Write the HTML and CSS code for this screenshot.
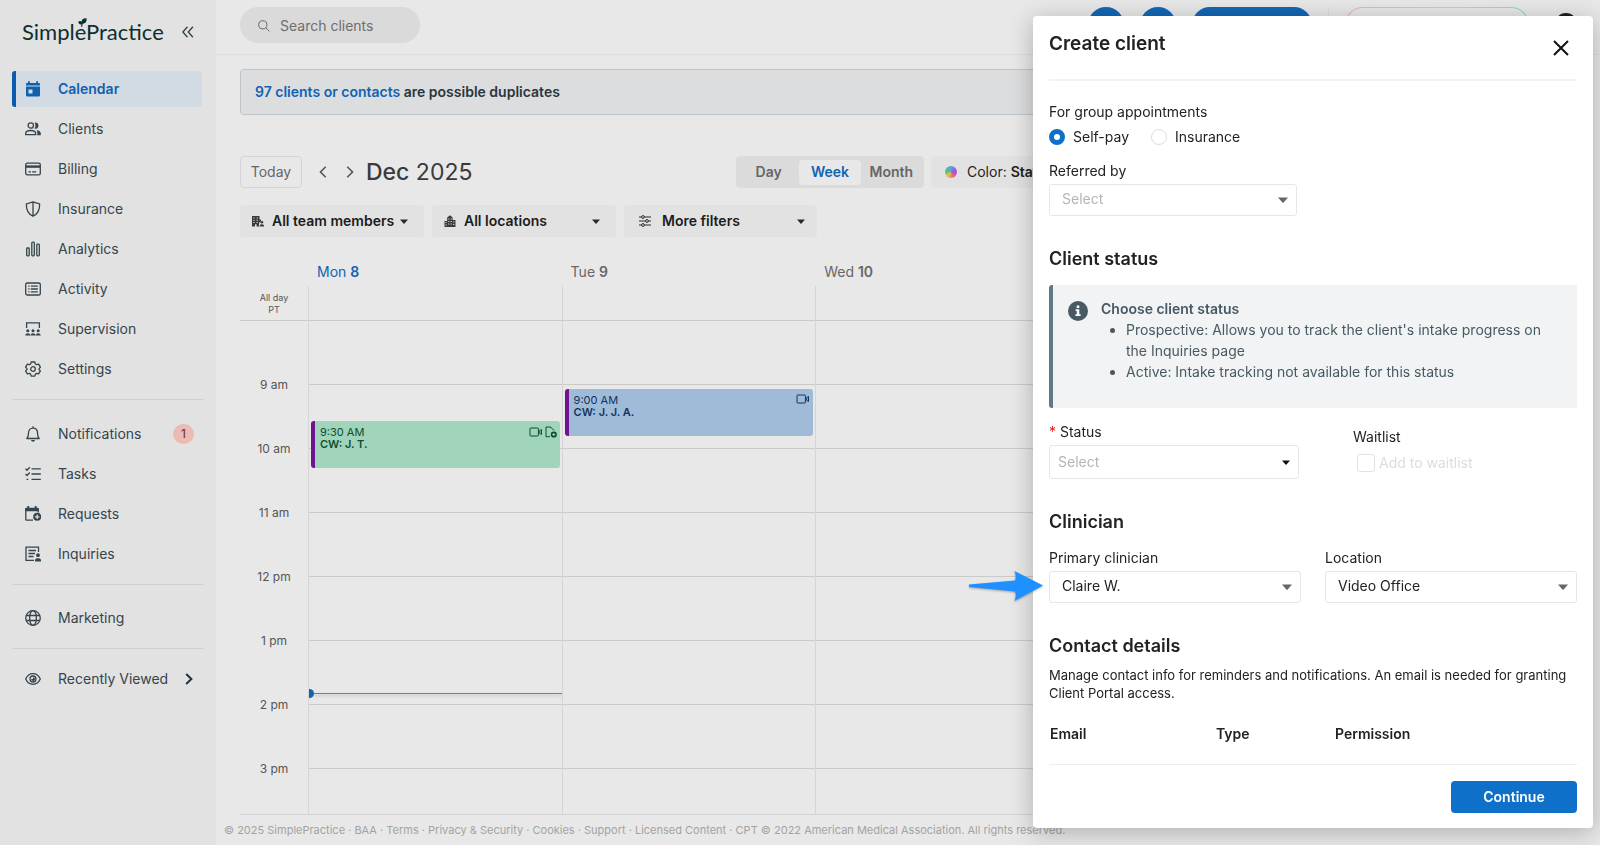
FILE: index.html
```html
<!DOCTYPE html>
<html lang="en">

<head>
  <meta charset="utf-8">
  <title>Calendar - SimplePractice</title>
  <link rel="stylesheet" href="styles.css">
</head>

<body>
  <svg class="defs" width="0" height="0">
    <defs>
      <symbol id="caret" viewBox="0 0 10 6"><path d="M0 0.5h10L5.6 5.6a.8.8 0 0 1-1.2 0z" /></symbol>
      <symbol id="video" viewBox="0 0 14 10">
        <rect x="1" y="1" width="8.4" height="8" rx=".6" fill="none" stroke="currentColor" />
        <path d="M10.700 3.500 12.500 2.500v5L10.700 6.500z" fill="none" stroke="currentColor" />
      </symbol>
    </defs>
  </svg>

  <div class="app">
    <aside class="sidebar">
      <div class="brand">
        <a class="logo" href="#">SimplePractice
          <svg class="leaf" viewBox="0 0 10 10"><path d="M9.6.4C6 .2 4 1.600 4.200 4 2.800 3 1.400 3.200.200 4.200c.6 2.600 2 3.400 3.600 2.800L3.400 9.800h1.400c-.1-1.500.1-2.400.6-3.400C8.600 6.400 9.700 4 9.600.4z" /></svg>
        </a>
        <button class="collapse" type="button" aria-label="Collapse menu">
          <svg width="12" height="12" viewBox="0 0 12 12"><path d="M5.500.8.9 6l4.600 5.200M10.900.8 6.300 6l4.600 5.200" /></svg>
        </button>
      </div>

      <nav class="nav">
        <a class="nav-item active" href="#">
          <svg class="icon" viewBox="0 0 16 16"><path fill="currentColor" d="M1 5.500h14V14.200a1.300 1.300 0 0 1-1.300 1.300H2.300A1.300 1.300 0 0 1 1 14.200zM3.500 8.500v4h4v-4zM1 4.500V3.200C1 2.500 1.500 2 2.200 2H3V.2h1.800V2h6.400V.2H13V2h.8c.7 0 1.200.5 1.200 1.200v1.300z" fill-rule="evenodd" /></svg>
          Calendar</a>
        <a class="nav-item" href="#">
          <svg class="icon" viewBox="0 0 16 16"><circle cx="5.800" cy="4.500" r="2.700" /><path d="M.7 13.600v-1c0-2 2.200-3.100 5-3.100s5 1.100 5 3.100v1z" /><path class="solid" d="M9.500 1.500a3.200 3.200 0 1 1 0 6.200c1.300-1.500 1.300-4.600 0-6.200zM11.600 9c2.600.5 4.200 1.800 4.200 3.600v1.600h-3.500v-1.700c0-1.400 0-2.400-.7-3.500z" /></svg>
          Clients</a>
        <a class="nav-item" href="#">
          <svg class="icon" viewBox="0 0 16 16"><rect x=".7" y="2.200" width="14.600" height="11.600" rx="1.600" /><path class="solid" d="M1 4.400h14v2.400H1z" /><path d="M3.500 10.800h2.500M7.200 10.800h4" /></svg>
          Billing</a>
        <a class="nav-item" href="#">
          <svg class="icon" viewBox="0 0 16 16"><path d="M8 .9 14.600 3c.3 5.800-1.500 9.800-6.600 12.200C2.900 12.800 1.100 8.800 1.400 3zM8 1v14" /></svg>
          Insurance</a>
        <a class="nav-item" href="#">
          <svg class="icon" viewBox="0 0 16 16"><rect x="1.700" y="7" width="2.500" height="7.800" rx=".8" /><rect x="6.800" y="1.200" width="2.500" height="13.600" rx=".8" /><rect x="11.800" y="3.200" width="2.500" height="11.600" rx=".8" /></svg>
          Analytics</a>
        <a class="nav-item" href="#">
          <svg class="icon" viewBox="0 0 16 16"><rect x=".7" y="2" width="14.600" height="12" rx="1.600" /><path d="M3.300 5.200h1.200M3.300 8h1.200M3.300 10.800h1.200M5.800 5.200h7M5.800 8h7M5.800 10.800h7" /></svg>
          Activity</a>
        <a class="nav-item" href="#">
          <svg class="icon" viewBox="0 0 16 16"><path d="M1.600 7V1.800h12.800V7" /><g class="solid"><circle cx="2.800" cy="9.800" r="1.500" /><circle cx="8" cy="9.800" r="1.500" /><circle cx="13.200" cy="9.800" r="1.500" /><path d="M.3 14.600c0-3 5-3 5 0zM5.500 14.600c0-3 5-3 5 0zM10.700 14.600c0-3 5-3 5 0z" /></g></svg>
          Supervision</a>
        <a class="nav-item" href="#">
          <svg class="icon" viewBox="0 0 16 16"><path d="M6.200 1h3.600l.6 2 1.200.7 2-.5 1.800 3L14 7.600v.9l1.400 1.400-1.800 3-2-.5-1.200.7-.6 2H6.200l-.6-2-1.200-.7-2 .5-1.800-3L2 8.500v-.9L.6 6.200l1.800-3 2 .5L5.600 3z" stroke-linejoin="round" /><circle cx="8" cy="8" r="2.300" /></svg>
          Settings</a>
      </nav>

      <nav class="nav">
        <a class="nav-item" href="#">
          <svg class="icon" viewBox="0 0 16 16"><path d="M1.800 12.500c1.500-1.400 1.700-3 1.700-5.500 0-3 1.900-4.900 4.500-4.900s4.500 1.900 4.500 4.900c0 2.500.2 4.100 1.700 5.500zM8 .3v1.800" stroke-linejoin="round" /><path class="solid" d="M6 14h4c-.3 1.100-1 1.700-2 1.700S6.300 15.100 6 14z" /></svg>
          Notifications <span class="badge">1</span></a>
        <a class="nav-item" href="#">
          <svg class="icon" viewBox="0 0 16 16"><path d="M6.500 2.800h9.300M6.500 8h9.300M6.500 13.400h9.300M.5 2.700 2 4.200l2.800-3M.5 8 2 9.500l2.800-3M1.500 13.400h1.800" /></svg>
          Tasks</a>
        <a class="nav-item" href="#">
          <svg class="icon" viewBox="0 0 16 16"><path d="M8 14.200H1.700A1 1 0 0 1 .8 13.200V3h12.400v3.500" /><path class="solid" d="M.2 5.200V3.200c0-.9.5-1.400 1.300-1.400h.8V0h1.900v1.800h5.500V0h1.900v1.800h.8c.8 0 1.300.5 1.300 1.400v2z" /><path class="solid" fill-rule="evenodd" d="M12.200 6.800a4 4 0 1 1 0 8 4 4 0 0 1 0-8zM11.600 8.600v1.600H10v1.200h1.600V13h1.200v-1.600h1.600v-1.200h-1.600V8.600z" /></svg>
          Requests</a>
        <a class="nav-item" href="#">
          <svg class="icon" viewBox="0 0 16 16"><path d="M9 14.300H1V1.200h12.500V6M3.500 4.500H11M3.500 7.500H10M3.500 10.500h5" /><g class="solid"><circle cx="13" cy="9.200" r="1.900" /><path d="M10 15.600v-1.400c0-2.500 6-2.500 6 0v1.400z" /></g></svg>
          Inquiries</a>
      </nav>

      <nav class="nav">
        <a class="nav-item" href="#">
          <svg class="icon" viewBox="0 0 16 16"><circle cx="8" cy="8" r="7.300" /><ellipse cx="8" cy="8" rx="3.400" ry="7.300" /><path d="M1.300 5.500h13.400M1.300 10.500h13.400" /></svg>
          Marketing</a>
      </nav>

      <nav class="nav">
        <a class="nav-item" href="#">
          <svg class="icon" viewBox="0 0 16 16"><path d="M.7 8C2.300 4.400 5 2.700 8 2.700S13.700 4.400 15.300 8C13.700 11.600 11 13.300 8 13.300S2.300 11.600.7 8z" /><circle cx="8" cy="8" r="3" /><path class="solid" d="M6.200 8H8V6.200A1.900 1.900 0 1 1 6.200 8z" /></svg>
          Recently Viewed
          <svg class="more" width="8" height="12" viewBox="0 0 8 12"><path d="M1.200 1 6.400 6l-5.200 5" /></svg></a>
      </nav>
    </aside>

    <main class="main">
      <header class="topbar">
        <label class="search">
          <svg width="12" height="12" viewBox="0 0 12 12"><circle cx="4.800" cy="4.800" r="4.100" /><path d="m7.900 7.900 3.500 3.500" /></svg>
          <input type="search" placeholder="Search clients" aria-label="Search clients">
        </label>
        <div class="actions">
          <button class="round" type="button" aria-label="Messages"></button>
          <button class="round" type="button" aria-label="Help"></button>
          <button class="create" type="button" aria-label="Create"></button>
          <span class="sep"></span>
          <button class="assistant" type="button" aria-label="Assistant"></button>
          <button class="avatar" type="button" aria-label="Account"></button>
        </div>
      </header>

      <div class="content">
        <p class="notice"><a href="#">97 clients or contacts</a> are possible duplicates</p>

        <div class="toolbar">
          <button class="today" type="button">Today</button>
          <button class="arrow" type="button" aria-label="Previous week"><svg width="8" height="12" viewBox="0 0 8 12"><path d="M6.700.8 1.500 6l5.200 5.200" /></svg></button>
          <button class="arrow" type="button" aria-label="Next week"><svg width="8" height="12" viewBox="0 0 8 12"><path d="M1.300.8 6.500 6l-5.200 5.200" /></svg></button>
          <h1 class="month"><b>Dec</b> 2025</h1>
          <div class="views">
            <button type="button">Day</button>
            <button class="selected" type="button">Week</button>
            <button type="button">Month</button>
          </div>
          <button class="color" type="button"><span class="wheel"></span><span>Color: <b>Status</b></span></button>
        </div>

        <div class="filters">
          <div class="filter">
            <svg class="filter-icon" viewBox="0 0 12 12"><path fill-rule="evenodd" d="M0 1h7.500v3.500H9v2A2.500 2.500 0 0 0 7 9v2.500H4.600V9.300H3v2.200H0zM1.400 2.500v1h1.200v-1zM4.600 2.500v1h1.200v-1zM1.400 4.800v1h1.200v-1zM4.600 4.800v1h1.200v-1zM1.400 7.100v1h1.200v-1zM4.600 7.100v1h1.200v-1z" /><circle cx="9.900" cy="7.200" r="1.300" /><path d="M7.700 11.500v-.8c0-2 4.300-2 4.300 0v.8z" /></svg>
            <select aria-label="Team members"><option>All team members</option></select>
            <svg class="caret" width="8" height="5"><use href="#caret" /></svg>
          </div>
          <div class="filter">
            <svg class="filter-icon" viewBox="0 0 12 12"><path fill-rule="evenodd" d="M.5 6h2.700V2.500L6 .2l2.600 2.300V5h2.900v7H.5zM1.500 7v1h1.200V7zM1.500 9.400v1h1.200v-1zM4.200 3.400v1h1.200v-1zM6.600 3.400v1h1.200v-1zM4.200 6v1h1.200V6zM6.600 6v1h1.200V6zM4.200 8.500v1h1.200v-1zM6.600 8.500v1h1.200v-1zM9.200 6.500v1h1.200v-1zM9.200 9v1h1.200V9z" /></svg>
            <select aria-label="Locations"><option>All locations</option></select>
            <svg class="caret" width="8" height="5"><use href="#caret" /></svg>
          </div>
          <div class="filter wide">
            <svg class="filter-icon line" viewBox="0 0 12 12"><path d="M0 2h2.500M5.500 2H12M0 6h6.500M9.500 6H12M0 10h2.500M5.500 10H12" /><circle cx="4" cy="2" r="1.400" /><circle cx="8" cy="6" r="1.400" /><circle cx="4" cy="10" r="1.400" /></svg>
            <select aria-label="More filters"><option>More filters</option></select>
            <svg class="caret" width="8" height="5"><use href="#caret" /></svg>
          </div>
        </div>

        <div class="calendar">
          <div class="cal-row cal-head">
            <span></span>
            <span class="current">Mon <b>8</b></span>
            <span>Tue <b>9</b></span>
            <span>Wed <b>10</b></span>
            <span></span>
            <span></span>
          </div>
          <div class="cal-row all-day">
            <span class="all-day-label">All day<br>PT</span>
            <div class="day"></div><div class="day"></div><div class="day"></div><div class="day"></div><div class="day"></div>
          </div>
          <div class="cal-row cal-body">
            <div class="hours">
              <span>9 am</span><span>10 am</span><span>11 am</span><span>12 pm</span><span>1 pm</span><span>2 pm</span><span>3 pm</span>
            </div>
            <div class="day slots">
              <a class="event confirmed" href="#" style="top: 100px">
                <span>9:30 AM</span><b>CW: J. T.</b>
                <span class="event-icons">
                  <svg width="14" height="10"><use href="#video" /></svg>
                  <svg width="12" height="12" viewBox="0 0 12 12"><path d="M5 10.700H1V1h4.500L9 4.500M5.500 1v1" fill="none" stroke="currentColor" /><path fill="currentColor" fill-rule="evenodd" d="M8.800 5.400a3.100 3.100 0 1 1 0 6.200 3.100 3.100 0 0 1 0-6.200zM8.300 7v1h-1v1h1v1h1V9h1V8h-1V7z" /></svg>
                </span>
              </a>
              <div class="now" style="top: 372px"></div>
            </div>
            <div class="day slots">
              <a class="event" href="#" style="top: 68px">
                <span>9:00 AM</span><b>CW: J. J. A.</b>
                <span class="event-icons"><svg width="14" height="10"><use href="#video" /></svg></span>
              </a>
            </div>
            <div class="day slots"></div>
            <div class="day slots"></div>
            <div class="day slots"></div>
          </div>
        </div>
      </div>

      <footer class="legal">© 2025 SimplePractice · <a href="#">BAA</a> · <a href="#">Terms</a> · <a href="#">Privacy &amp; Security</a> · <a href="#">Cookies</a> · <a href="#">Support</a> · <a href="#">Licensed Content</a> · CPT © 2022 American Medical Association. All rights reserved.</footer>
    </main>
  </div>

  <form class="drawer">
    <header class="drawer-head">
      <h2>Create client</h2>
      <button class="close" type="button" aria-label="Close"><svg width="16" height="16" viewBox="0 0 16 16"><path d="m1 1 14 14M15 1 1 15" /></svg></button>
    </header>

    <div class="drawer-body">
      <fieldset class="billing">
        <legend>For group appointments</legend>
        <label><input type="radio" name="billing" checked>Self-pay</label>
        <label><input type="radio" name="billing">Insurance</label>
      </fieldset>

      <div class="field referred">
        <label for="referred">Referred by</label>
        <div class="select">
          <select id="referred" class="empty"><option>Select</option></select>
          <svg class="caret" width="10" height="6"><use href="#caret" /></svg>
        </div>
      </div>

      <section>
        <h3>Client status</h3>
        <div class="info">
          <svg width="20" height="20" viewBox="0 0 20 20"><circle cx="10" cy="10" r="10" /><path fill="#fff" d="M8.700 4.500h2.600V7H8.700zM7.600 8.200h3.700v5h1.300v1.700H7.400v-1.700h1.400V9.900H7.600z" /></svg>
          <div>
            <strong>Choose client status</strong>
            <ul>
              <li>Prospective: Allows you to track the client's intake progress on the Inquiries page</li>
              <li>Active: Intake tracking not available for this status</li>
            </ul>
          </div>
        </div>
        <div class="status-row">
          <div class="field">
            <label for="status"><span class="required">*</span> Status</label>
            <div class="select tall">
              <select id="status" class="empty"><option>Select</option></select>
              <svg class="caret dark" width="8" height="5"><use href="#caret" /></svg>
            </div>
          </div>
          <fieldset class="waitlist">
            <legend>Waitlist</legend>
            <label><input type="checkbox" disabled>Add to waitlist</label>
          </fieldset>
        </div>
      </section>

      <section>
        <h3>Clinician</h3>
        <div class="two-cols">
          <div class="field">
            <label for="clinician">Primary clinician</label>
            <div class="select">
              <select id="clinician"><option>Claire W.</option></select>
              <svg class="caret" width="10" height="6"><use href="#caret" /></svg>
            </div>
          </div>
          <div class="field">
            <label for="location">Location</label>
            <div class="select">
              <select id="location"><option>Video Office</option></select>
              <svg class="caret" width="10" height="6"><use href="#caret" /></svg>
            </div>
          </div>
        </div>
      </section>

      <section>
        <h3>Contact details</h3>
        <p class="hint">Manage contact info for reminders and notifications. An email is needed for granting Client Portal access.</p>
        <table class="contacts">
          <thead>
            <tr><th class="col-email">Email</th><th class="col-type">Type</th><th>Permission</th></tr>
          </thead>
        </table>
      </section>
    </div>

    <footer class="drawer-foot">
      <button class="primary" type="submit">Continue</button>
    </footer>

    <!-- pointer to the clinician field -->
    <svg class="pointer" width="76" height="32" viewBox="0 0 76 32"><path d="M1 14.500 47 10.500C48.500 7.500 47.500 4 46.500 1L75 15.500 46.500 31c1-3 2-6.500.5-9.500L1 17z" /></svg>
  </form>
</body>

</html>
```

FILE: styles.css
```css
* {
  box-sizing: border-box;
}

body {
  margin: 0;
  background: #e8e8e8;
  color: #36454c;
  font-family: Inter, "Liberation Sans", sans-serif;
  font-size: 14px;
  line-height: 20px;
}

button, input, select {
  margin: 0;
  padding: 0;
  border: 0;
  background: none;
  color: inherit;
  font: inherit;
}

select {
  appearance: none;
}

a {
  color: inherit;
  text-decoration: none;
}

h1, h2, h3, p, ul {
  margin: 0;
}

b, strong {
  font-weight: 600;
}

fieldset {
  margin: 0;
  padding: 0;
  border: 0;
}

legend {
  padding: 0;
}

.defs {
  position: absolute;
}

.app {
  display: flex;
  height: 100vh;
}

/* Sidebar */
.sidebar {
  flex: 0 0 216px;
  padding: 0 12px;
  background: #e2e2e2;
}

.brand {
  display: flex;
  align-items: center;
  justify-content: space-between;
  height: 71px;
  padding: 0 10px 8px;
}

.logo {
  position: relative;
  color: #0b2f33;
  font-family: Lato, sans-serif;
  font-size: 22px;
  line-height: 24px;
}

.leaf {
  position: absolute;
  top: -2px;
  left: 56px;
  width: 9px;
  height: 9px;
  fill: #0b2f33;
}

.collapse svg {
  display: block;
  fill: none;
  stroke: #36454c;
  stroke-width: 1.4;
}

.nav {
  display: flex;
  flex-direction: column;
  gap: 4px;
  padding-bottom: 12px;
}

.nav + .nav {
  padding-top: 16px;
  border-top: 1px solid #d0d0d0;
}

.nav + .nav + .nav {
  padding-top: 15px;
}

.nav + .nav + .nav + .nav {
  padding-top: 12px;
}

.nav-item {
  display: flex;
  align-items: center;
  height: 36px;
  padding-left: 13px;
  margin-right: 2px;
}

.nav-item.active {
  padding-left: 9px;
  border-left: 4px solid #0b5cad;
  border-radius: 3px;
  background: #d2dae4;
  color: #1060b0;
  font-weight: 600;
}

.icon {
  width: 16px;
  height: 16px;
  margin-right: 17px;
  fill: none;
  stroke: currentColor;
  stroke-width: 1.3;
}

.active .icon {
  stroke: none;
}

.solid {
  fill: currentColor;
  stroke: none;
}

.badge {
  width: 21px;
  height: 20px;
  margin: 0 8px 0 auto;
  border-radius: 10px;
  background: #ebbab3;
  color: #6d2a24;
  font-size: 12px;
  text-align: center;
}

.more {
  margin: 0 9px 0 auto;
  fill: none;
  stroke: #22313a;
  stroke-width: 2;
}

/* Main column */
.main {
  display: flex;
  flex: 1;
  flex-direction: column;
  min-width: 0;
}

.topbar {
  display: flex;
  justify-content: space-between;
  height: 55px;
  padding: 7px 23px 0 24px;
  border-bottom: 1px solid #dedede;
}

.search {
  display: flex;
  align-items: center;
  gap: 10px;
  width: 180px;
  height: 36px;
  padding: 1px 18px 0;
  border-radius: 18px;
  background: #dadada;
}

.search svg {
  flex: none;
  fill: none;
  stroke: #6b6b6b;
}

.search input {
  width: 100%;
}

.search input::placeholder {
  color: #6e6e6e;
}

.actions {
  display: flex;
  gap: 16px;
}

.round, .create {
  width: 36px;
  height: 36px;
  border-radius: 18px;
  background: #1366b5;
}

.create {
  width: 120px;
}

.sep {
  width: 1px;
  height: 36px;
  background: #dedede;
}

.assistant {
  width: 184px;
  height: 36px;
  border: 1px solid transparent;
  border-radius: 18px;
  background: linear-gradient(#e8e8e8, #e8e8e8) padding-box, linear-gradient(90deg, #e5b5b5, #b9d3d8 60%, #8fcfe0) border-box;
}

.avatar {
  width: 22px;
  height: 22px;
  margin: 6px 0 0 10px;
  border-radius: 50%;
  background: #14232a;
}

.content {
  display: flex;
  flex: 1;
  flex-direction: column;
  min-height: 0;
  padding: 14px 24px 0;
}

.notice {
  padding: 12px 14px;
  border: 1px solid #bdc5ca;
  border-radius: 4px;
  background: #dcdddf;
  color: #2a363c;
  font-weight: 600;
}

.notice a {
  color: #1163b3;
}

.toolbar {
  display: flex;
  align-items: center;
  height: 34px;
  margin-top: 40px;
}

.today {
  width: 62px;
  height: 32px;
  margin-right: 7px;
  border: 1px solid #d5d5d5;
  border-radius: 4px;
  color: #666;
}

.arrow {
  width: 27px;
  height: 32px;
}

.arrow svg {
  display: block;
  margin: 0 auto;
  fill: none;
  stroke: #555;
  stroke-width: 1.6;
}

.month {
  margin-left: 3px;
  color: #3a3a3a;
  font-size: 23px;
  font-weight: 400;
  line-height: 32px;
}

.month b {
  font-weight: 500;
}

.views {
  display: flex;
  align-items: center;
  width: 188px;
  height: 32px;
  margin-left: auto;
  padding: 0 2px;
  border-radius: 4px;
  background: #dbdbdb;
  color: #666;
  font-weight: 600;
}

.views button {
  flex: 1;
  height: 25px;
  border-radius: 4px;
}

.views .selected {
  background: #e8e8e8;
  color: #1163b3;
}

.color {
  display: flex;
  align-items: center;
  gap: 10px;
  width: 645px;
  height: 32px;
  margin-left: 7px;
  padding: 0 14px;
  border-radius: 4px;
  background: #e2e2e2;
  color: #222;
}

.wheel {
  width: 12px;
  height: 12px;
  border-radius: 50%;
  background: conic-gradient(#5ba3d8, #8b6be0, #b14de8, #e0559b, #e8935b, #dcc94e, #63c07a, #4fb3b5, #5ba3d8);
}

.filters {
  display: flex;
  gap: 8px;
  margin-top: 16px;
}

.filter, .select {
  display: grid;
  align-items: center;
}

.filter > *, .select > * {
  grid-area: 1 / 1;
}

.filter {
  width: 184px;
}

.filter.wide {
  width: 193px;
}

.filter select {
  width: 100%;
  height: 32px;
  padding-left: 32px;
  border-radius: 4px;
  background: #e2e2e2;
  color: #1c1c1c;
  font-weight: 600;
}

.filter.wide select {
  padding-left: 38px;
}

.filter-icon {
  z-index: 1;
  width: 12px;
  height: 12px;
  margin-left: 12px;
  fill: #3a3a3a;
}

.wide .filter-icon {
  margin-left: 15px;
}

.filter-icon.line {
  fill: none;
  stroke: #2a2a2a;
}

.caret {
  justify-self: end;
  margin-right: 9px;
  fill: #666;
  pointer-events: none;
}

.filter .caret {
  margin-right: 16px;
  fill: #2a2a2a;
}

.filter.wide .caret {
  margin-right: 12px;
}

/* Calendar */
.calendar {
  display: flex;
  flex: 1;
  flex-direction: column;
  min-height: 0;
  margin-top: 22px;
  border-bottom: 1px solid #d4d4d4;
}

.cal-row {
  display: grid;
  grid-template-columns: 68px repeat(5, 1fr);
}

.cal-head {
  height: 27px;
  color: #666;
  line-height: 26px;
}

.cal-head span {
  padding-left: 9px;
}

.cal-head .current {
  color: #1163b3;
}

.all-day {
  height: 34px;
}

.all-day-label {
  padding-top: 6px;
  color: #555;
  font-size: 9px;
  line-height: 12px;
  text-align: center;
}

.day {
  border-left: 1px solid #d6d6d6;
}

.cal-body {
  flex: 1;
  min-height: 0;
  overflow: hidden;
}

.hours {
  padding-top: 32px;
  border-top: 1px solid #cacaca;
  color: #555;
  font-size: 12px;
  line-height: 64px;
  text-align: center;
}

.hours span {
  display: block;
}

/* one line per hour, the first one closes the all-day row */
.slots {
  position: relative;
  border-top: 1px solid #cacaca;
  background: linear-gradient(transparent 63px, #cacaca 63px) 0 0 / 100% 64px;
}

.event {
  position: absolute;
  right: 2px;
  left: 2px;
  display: flex;
  flex-direction: column;
  height: 47px;
  padding: 5px 4px 0 5px;
  border-left: 4px solid #6f1391;
  border-radius: 3px;
  background: #9fbbd8;
  color: #12345f;
  font-size: 11px;
  line-height: 12px;
}

.event.confirmed {
  background: #a0d4bb;
  color: #0d4f30;
}

.event-icons {
  position: absolute;
  top: 5px;
  right: 3px;
  display: flex;
  align-items: center;
  gap: 2px;
}

.now {
  position: absolute;
  right: 0;
  left: 0;
  height: 1px;
  background: #5d82b5;
  box-shadow: 0 2px 3px rgba(0, 0, 0, .2);
}

.now::before {
  content: "";
  position: absolute;
  top: -4px;
  width: 5px;
  height: 9px;
  border-radius: 0 5px 5px 0;
  background: #1163b3;
}

.legal {
  padding: 7px 8px;
  color: #a3a3a3;
  font-size: 11px;
  line-height: 16px;
  white-space: nowrap;
}

/* Create client drawer */
.drawer {
  position: fixed;
  top: 16px;
  right: 7px;
  bottom: 17px;
  display: flex;
  flex-direction: column;
  width: 35%;
  padding: 0 16px;
  border-radius: 4px;
  background: #fff;
  box-shadow: 0 4px 24px rgba(0, 0, 0, .25);
  color: #222;
}

.drawer-head {
  display: flex;
  justify-content: space-between;
  padding: 16px 8px 23px 0;
  border-bottom: 2px solid #f3f3f3;
}

h2 {
  font-size: 19px;
  font-weight: 600;
  line-height: 24px;
}

.close {
  height: 16px;
  margin-top: 8px;
}

.close svg {
  display: block;
  fill: none;
  stroke: #111;
  stroke-width: 2;
}

.drawer-body {
  flex: 1;
  padding-top: 21px;
}

.billing {
  display: flex;
  gap: 22px;
}

.billing legend {
  margin-bottom: 5px;
}

.billing label {
  display: flex;
  align-items: center;
  gap: 8px;
}

input[type="radio"] {
  appearance: none;
  width: 16px;
  height: 16px;
  border: 1px solid #ddd;
  border-radius: 50%;
}

input[type="radio"]:checked {
  border: 5px solid #0f70c9;
}

.field {
  display: flex;
  flex-direction: column;
  gap: 3px;
}

.select select {
  width: 100%;
  height: 32px;
  padding: 0 12px 2px;
  border: 1px solid #e6e6e6;
  border-radius: 3px;
  background: #fff;
}

.select .empty {
  color: #b5b5b5;
}

.select.tall select {
  height: 34px;
  padding: 0 8px;
}

.select .dark {
  fill: #111;
}

.referred {
  width: 248px;
  margin-top: 14px;
}

section {
  margin-top: 32px;
}

h3 {
  font-size: 18px;
  font-weight: 600;
  line-height: 22px;
}

.info {
  display: flex;
  gap: 13px;
  margin-top: 15px;
  padding: 13px 32px 26px 15px;
  border-left: 4px solid #5f7b87;
  border-radius: 3px 0 0 3px;
  background: #f1f3f5;
  color: #475962;
  line-height: 21px;
}

.info svg {
  flex: none;
  margin-top: 3px;
  fill: #475962;
}

.info ul {
  padding-left: 25px;
}

.status-row {
  display: flex;
  gap: 54px;
  margin-top: 14px;
}

.status-row .field {
  width: 250px;
}

.required {
  color: #d22;
}

.waitlist {
  margin-top: 5px;
}

.waitlist label {
  display: flex;
  align-items: center;
  gap: 4px;
  margin: 6px 0 0 4px;
  color: #dcdcdc;
}

input[type="checkbox"] {
  appearance: none;
  width: 18px;
  height: 18px;
  border: 1px solid #e3e3e3;
  border-radius: 3px;
}

.two-cols {
  display: grid;
  grid-template-columns: 1fr 1fr;
  gap: 24px;
  margin-top: 15px;
}

.hint {
  margin-top: 9px;
  font-size: 13px;
  line-height: 18px;
}

.contacts {
  width: 100%;
  margin-top: 22px;
  border-spacing: 0;
  table-layout: fixed;
}

.contacts th {
  padding: 0 0 0 1px;
  font-weight: 600;
  text-align: left;
}

.col-email {
  width: 166px;
}

.col-type {
  width: 119px;
}

.drawer-foot {
  display: flex;
  justify-content: flex-end;
  padding: 16px 0 15px;
  border-top: 1px solid #ededed;
}

.primary {
  width: 126px;
  height: 32px;
  border-radius: 4px;
  background: #0f70c9;
  color: #fff;
  font-weight: 600;
}

.pointer {
  position: absolute;
  top: 554px;
  left: -65px;
  fill: #1e90ff;
  filter: drop-shadow(0 1px 1px rgba(0, 0, 0, .3));
}
```
